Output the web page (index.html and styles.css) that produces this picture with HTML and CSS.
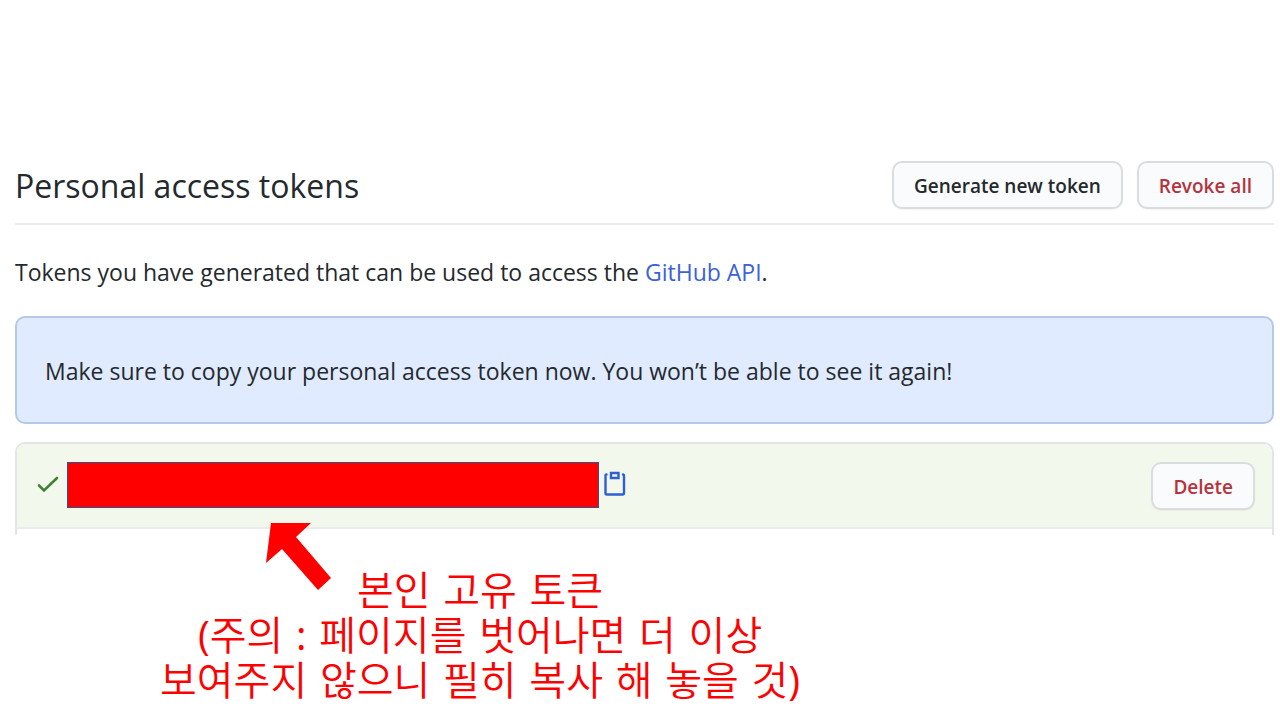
FILE: index.html
```html
<!DOCTYPE html>
<html lang="en">
<head>
<meta charset="utf-8">
<meta name="viewport" content="width=device-width, initial-scale=1">
<title>Personal access tokens</title>
<link rel="stylesheet" href="styles.css">
</head>
<body>
<main class="page">
  <header class="subhead">
    <h1 class="subhead-title">Personal access tokens</h1>
    <div class="subhead-actions">
      <button class="btn" type="button">Generate new token</button>
      <button class="btn btn-danger" type="button">Revoke all</button>
    </div>
  </header>
  <p class="intro">Tokens you have generated that can be used to access the <a class="link" href="#">GitHub API</a>.</p>
  <div class="flash">Make sure to copy your personal access token now. You won’t be able to see it again!</div>
  <section class="token-list">
    <div class="token">
      <svg class="check" viewBox="0 0 24 24" aria-hidden="true"><path d="M4 13.500 9 18.500 22 6" fill="none" stroke="#418035" stroke-width="2.600" stroke-linecap="round"/></svg>
      <span class="redacted"></span>
      <button class="copy" type="button" aria-label="Copy token">
        <svg class="copy-icon" viewBox="0 0 22 26" aria-hidden="true"><g fill="none" stroke="#2f5fd3" stroke-width="2.400" stroke-linecap="round"><path d="M2.500 3.500C1.700 3.500 1.500 4 1.500 5V22Q1.500 23.500 3 23.500H18.500Q20 23.500 20 22V5C20 4 19.800 3.500 19 3.500"/><path d="M7 2H14.500V7H7Z"/></g></svg>
      </button>
      <button class="btn btn-danger token-delete" type="button">Delete</button>
    </div>
  </section>
  <div class="note" lang="ko">
    <svg class="arrow" viewBox="0 0 66 68" aria-hidden="true"><path d="M6 0H46L31 14 66 55 53 67 17 26 1 40Z" fill="#f00"/></svg>
    <p class="note-text">본인 고유 토큰<br><span class="punct">(</span>주의 <span class="punct">:</span> 페이지를 벗어나면 더 이상<br>보여주지 않으니 필히 복사 해 놓을 것<span class="punct">)</span></p>
  </div>
</main>
</body>
</html>
```
FILE: styles.css
```css
* {
  box-sizing: border-box;
}

body {
  margin: 0;
  background: #fff;
  color: #24292e;
  font: 23px/36px "Open Sans", "Noto Sans", sans-serif;
}

.page {
  padding: 161px 6px 0 15px;
}

.subhead {
  display: flex;
  align-items: center;
  justify-content: space-between;
  padding-bottom: 14px;
  border-bottom: 2px solid #e9eaec;
}

.subhead-title {
  margin: 0;
  padding-top: 2px;
  font-size: 32px;
  line-height: 46px;
  font-weight: 400;
}

.subhead-actions {
  display: flex;
  gap: 14px;
}

.btn {
  height: 48px;
  padding: 2px 20px 0;
  border: 2px solid #dadde0;
  border-radius: 10px;
  background: #fafbfc;
  box-shadow: 0 1px 1px rgba(27, 31, 35, 0.05);
  color: #24292e;
  font: 600 19px/28px "Open Sans", "Noto Sans", sans-serif;
  white-space: nowrap;
}

.btn-danger {
  color: #b5333e;
}

.intro {
  margin: 29px 0 26px;
}

.link {
  color: #3b62d6;
  text-decoration: none;
}

.flash {
  padding: 35px 28px 33px;
  border: 2px solid #b4c8e8;
  border-radius: 10px;
  background: #e0ebff;
}

.token-list {
  height: 93px;
  margin-top: 18px;
  border: 2px solid #e1e4e8;
  border-bottom: 0;
  border-radius: 10px 10px 0 0;
}

.token {
  display: flex;
  align-items: center;
  padding: 18px 17px 17px 18px;
  border-bottom: 2px solid #e9ebed;
  border-radius: 8px 8px 0 0;
  background: #f2f8ec;
}

.check {
  width: 24px;
  height: 24px;
  margin-bottom: 4px;
}

.redacted {
  flex: 0 1 532px;
  height: 46px;
  margin: 0 0 2px 8px;
  border: 1px solid #2f528f;
  background: #f00;
}

.copy {
  display: flex;
  margin: 0 0 4px 5px;
  padding: 0;
  border: 0;
  background: none;
}

.copy-icon {
  width: 22px;
  height: 26px;
}

.token-delete {
  margin-left: auto;
}

.note {
  position: absolute;
  top: 523px;
  left: 160px;
  color: #f00;
}

.arrow {
  display: block;
  width: 66px;
  height: 68px;
  margin-left: 105px;
}

.note-text {
  margin: -22px 0 0;
  font: 350 40px/45px "DejaVu Sans", "Noto Sans CJK KR", sans-serif;
  text-align: center;
  white-space: nowrap;
}

.punct {
  font-family: "Open Sans", "Noto Sans", sans-serif;
  font-weight: 400;
  line-height: 1;
}
```
